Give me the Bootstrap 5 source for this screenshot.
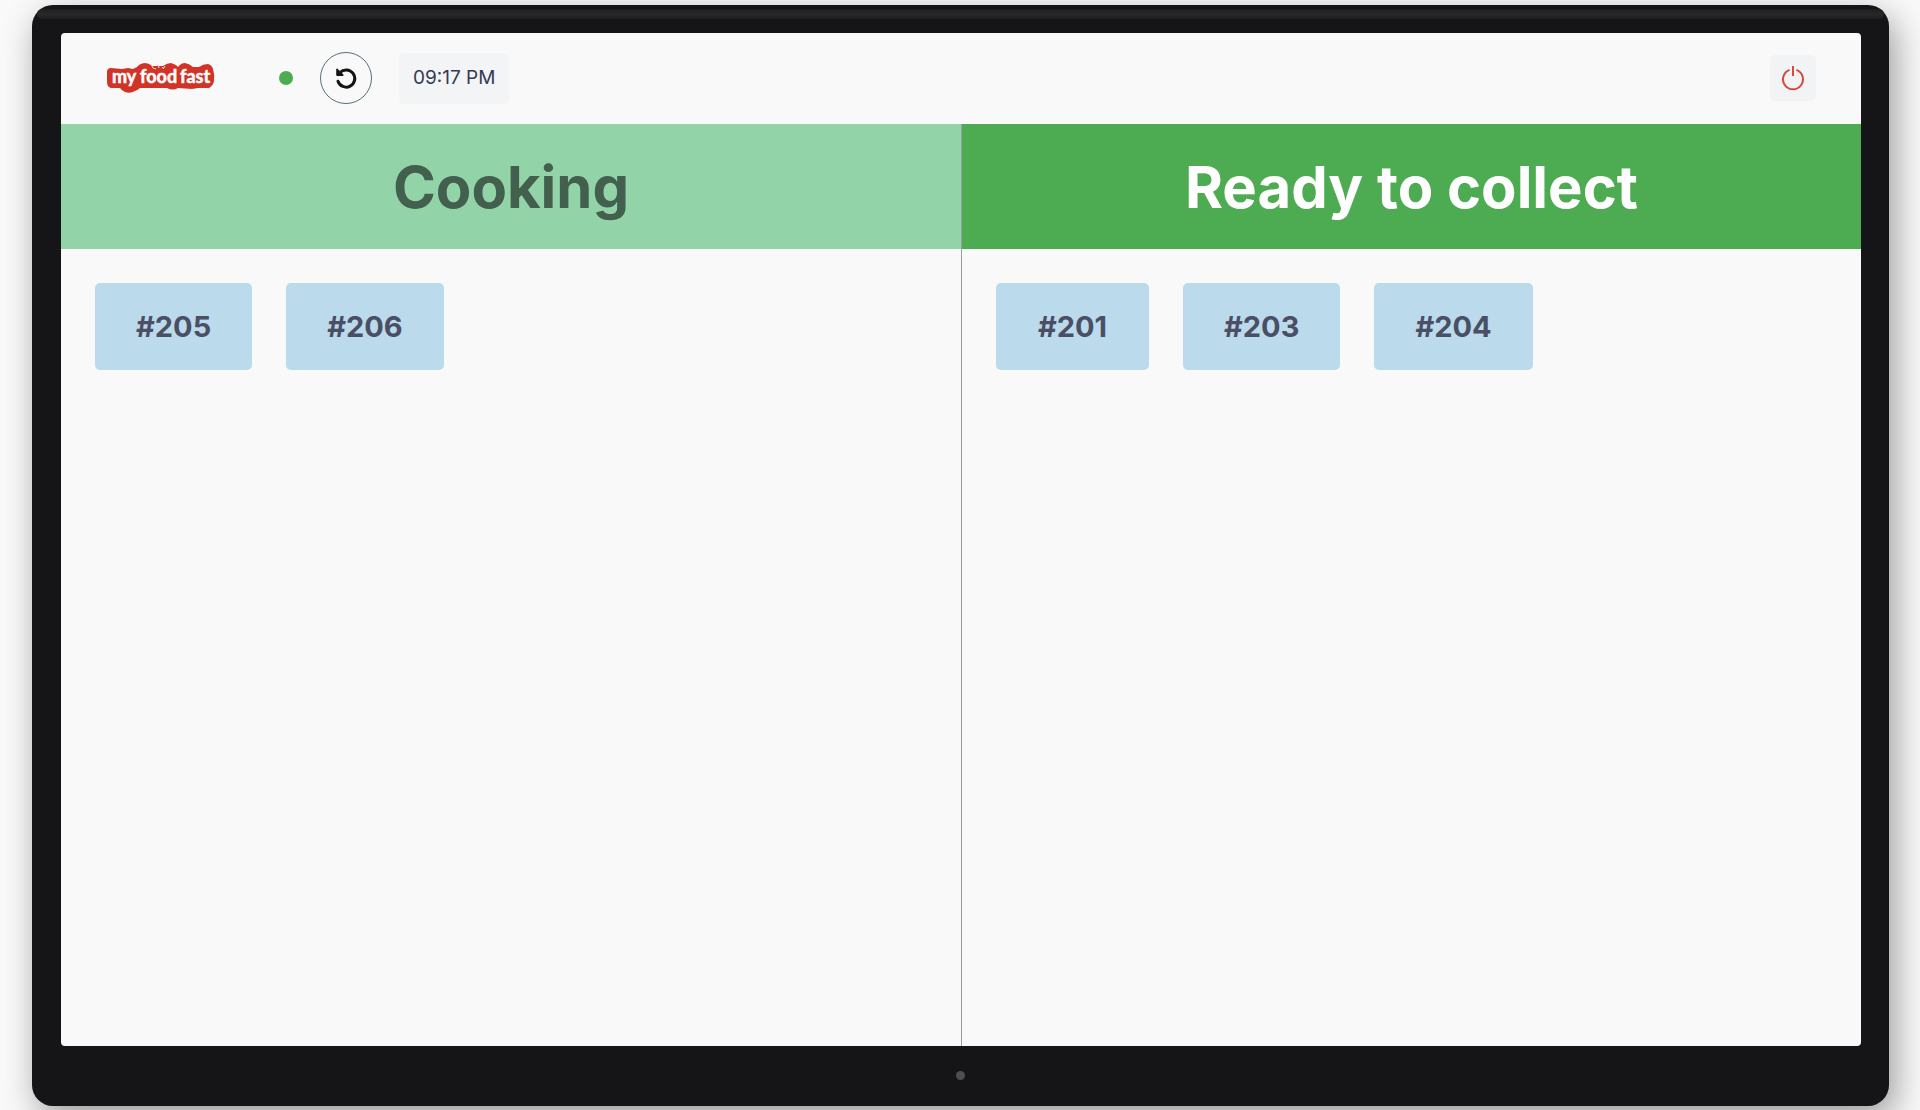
<!DOCTYPE html>
<html lang="en">
<head>
<meta charset="utf-8">
<meta name="viewport" content="width=device-width, initial-scale=1">
<title>Order status board</title>
<link href="https://cdn.jsdelivr.net/npm/bootstrap@5.3.0/dist/css/bootstrap.min.css" rel="stylesheet">
<style>
  body { font-family: Inter, "Liberation Sans", sans-serif; background: #f9f9f9; padding: 5px 31px 4px 32px; }
  .monitor {
    background: #151517; border-radius: 21px; padding: 4px 5px 0;
    box-shadow: 6px 12px 34px rgba(0, 0, 0, .38);
  }
  .monitor-gloss { height: 10px; border-radius: 8px; background: linear-gradient(#1d1d1f, #29292b 50%, #1d1d1f); }
  .monitor-screen { background: #f9f9f9; border-radius: 4px; margin: 14px 23px 0 24px; }
  .monitor-chin { height: 60px; padding-bottom: 1px; }
  .camera { width: 9px; height: 9px; background: #49504f; }
  .topbar { height: 91px; padding: 0 45px 1px 46px; }
  .status-dot { width: 14px; height: 14px; background: #4dab52; margin-left: 64px; }
  .tools { gap: 27px; }
  .reload-btn { width: 52px; height: 52px; border: 1px solid #56707a; background: transparent; }
  .clock { height: 51px; padding: 0 14px; font-size: 19px; color: #343b52; background: #f2f4f6; border-radius: 5px; }
  .power-btn { width: 46px; height: 46px; background: #f1f3f5; border-radius: 5px; }
  .board-title { height: 125px; font-size: 58px; line-height: 72px; font-weight: 700; }
  .board-ready { border-left: 1px solid #939ea5; }
  .board-cooking .board-title { background: #92d4a8; color: #435f4d; }
  .board-ready .board-title { background: #4dab52; color: #fff; }
  .orders { padding: 34px; gap: 34px; }
  .order { height: 87px; min-width: 153px; padding: 0 41px; border-radius: 5px; background: #bbdaeb; color: #4a4f65; font-size: 29px; font-weight: 700; }
</style>
</head>
<body class="vh-100 overflow-hidden">
<div class="monitor h-100 d-flex flex-column">
  <div class="monitor-gloss"></div>
  <main class="monitor-screen flex-grow-1 d-flex flex-column overflow-hidden">
    <header class="topbar d-flex align-items-center">
      <svg width="108" height="32" viewBox="107 62 108 32" role="img" aria-label="my food fast">
        <path fill="#d13427" d="M107 72Q107 68 111 68L122 69 128 68 133 69 137 67Q139 64 144 63Q149 63 152 66L157 66 163 66Q167 63 171 63L176 65 178 67Q181 63 185 63 190 64 193 67L199 67Q203 64 208 64 212 65 213 69 215 75 214 81 213 86 209 88L198 88 192 89 178 88Q173 91 167 88L140 88Q138 90 135 91 130 94 125 92 121 90 120 88L111 88Q107 87 107 82Z"/>
        <g font-family="Lato, sans-serif" font-weight="700" font-size="18" fill="#fff" stroke="#fff" stroke-width="0.5">
          <text x="112" y="83">my</text>
          <text x="140" y="83">food</text>
          <text x="180" y="83">fast</text>
        </g>
        <path d="M151 64l2 4 3 1M158 64l1 4M162 67l2 2M165 66l-2 3" stroke="#f9d9d5" stroke-width="1" fill="none"/>
      </svg>
      <div class="tools d-flex align-items-center">
        <span class="status-dot rounded-circle"></span>
        <button type="button" class="reload-btn btn rounded-circle p-0 d-flex align-items-center justify-content-center" aria-label="Reload">
          <svg width="24" height="24" viewBox="0 0 24 24" fill="none" stroke="#151517" stroke-width="3" stroke-linecap="round" stroke-linejoin="round">
            <path d="M4 15.2A8.6 8.6 0 1 0 6 6.5"/>
            <path d="M3 3.3v5.8h5.800z" fill="#151517" stroke-width="1.6"/>
          </svg>
        </button>
        <time class="clock d-flex align-items-center">09:17 PM</time>
      </div>
      <button type="button" class="power-btn btn border-0 p-0 ms-auto d-flex align-items-center justify-content-center" aria-label="Power off">
        <svg width="24" height="26" viewBox="0 0 24 26" fill="none" stroke="#d9483c" stroke-width="2">
          <path d="M8.6 4.9A10 10 0 1 0 15.4 4.9M12 1v10"/>
        </svg>
      </button>
    </header>
    <div class="row g-0 flex-grow-1">
      <section class="board-cooking col-6">
        <h1 class="board-title m-0 d-flex align-items-center justify-content-center">Cooking</h1>
        <div class="orders d-flex flex-wrap">
          <div class="order d-flex align-items-center justify-content-center">#205</div>
          <div class="order d-flex align-items-center justify-content-center">#206</div>
        </div>
      </section>
      <section class="board-ready col-6">
        <h1 class="board-title m-0 d-flex align-items-center justify-content-center">Ready to collect</h1>
        <div class="orders d-flex flex-wrap">
          <div class="order d-flex align-items-center justify-content-center">#201</div>
          <div class="order d-flex align-items-center justify-content-center">#203</div>
          <div class="order d-flex align-items-center justify-content-center">#204</div>
        </div>
      </section>
    </div>
  </main>
  <div class="monitor-chin d-flex align-items-center justify-content-center"><span class="camera rounded-circle"></span></div>
</div>
<script src="https://cdn.jsdelivr.net/npm/bootstrap@5.3.0/dist/js/bootstrap.bundle.min.js"></script>
</body>
</html>
